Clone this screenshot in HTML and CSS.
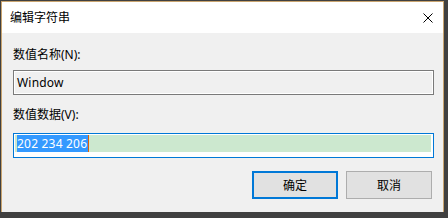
FILE: index.html
```html
<!DOCTYPE html>
<html lang="zh-CN">
<head>
  <meta charset="UTF-8">
  <title>编辑字符串</title>
  <link rel="stylesheet" href="styles.css">
</head>
<body>
  <div class="dialog">
    <div class="titlebar">
      <span class="title">编辑字符串</span>
      <span class="close">
        <svg width="10" height="10" viewBox="0 0 10 10">
          <path d="M0.5 0.5 L9.5 9.5 M9.5 0.5 L0.5 9.5" stroke="#000" stroke-width="1" fill="none"/>
        </svg>
      </span>
    </div>
    <div class="content">
      <div class="label label-name">数值名称(N):</div>
      <div class="field readonly">Window</div>
      <div class="label label-data">数值数据(V):</div>
      <div class="field active">
        <div class="band"><span class="sel">202 234 206</span><span class="caret"></span></div>
      </div>
      <div class="buttons">
        <button class="btn primary">确定</button>
        <button class="btn">取消</button>
      </div>
    </div>
  </div>
</body>
</html>
```

FILE: styles.css
```css
* { box-sizing: border-box; }
body {
  margin: 0;
  padding: 1px 0 0 1px;
  background: #404040;
  font-family: "Segoe UI", "Noto Sans", "Noto Sans CJK SC", sans-serif;
  font-size: 12px;
  color: #000;
  height: 218px;
  overflow: hidden;
}
.dialog {
  width: 443px; height: 211px;
  background: #f0f0f0;
  border: 1px solid #c9a46f;
  border-bottom: none;
}
.titlebar {
  height: 31px; background: #fff;
  display: flex; align-items: center; justify-content: space-between;
  padding: 0 9px 0 8px;
}
.title { line-height: 16px; }
.close { display: flex; width: 10px; height: 10px; margin-right: 1px; }
.content { padding: 14px 9px 0 11px; }
.label { line-height: 16px; }
.label-name { margin-bottom: 7px; }
.label-data { margin-top: 12px; margin-bottom: 10px; }
.field { height: 25px; letter-spacing: 0.2px; }
.readonly {
  border: 1px solid #7a7a7a;
  box-shadow: inset 0 0 0 1px #fff;
  padding-left: 3px;
  line-height: 23px;
}
.active {
  border: 1px solid #0078d7;
  background: #fff;
  padding: 1px 2px 5px 1px;
}
.band {
  height: 17px; background: #cce8cf;
  padding-left: 2px;
  display: flex; align-items: stretch;
}
.sel {
  background: #3399ff; color: #fff;
  line-height: 17px; padding-right: 1px;
}
.caret { width: 1px; background: #e0600a; }
.buttons {
  display: flex; justify-content: flex-end; gap: 8px;
  margin-top: 13px; margin-right: 2px;
}
.btn {
  width: 86px; height: 28px;
  background: #e1e1e1;
  border: 1px solid #adadad;
  font: inherit; color: #000;
  padding: 0;
}
.btn.primary { border: 2px solid #0078d7; }
```
